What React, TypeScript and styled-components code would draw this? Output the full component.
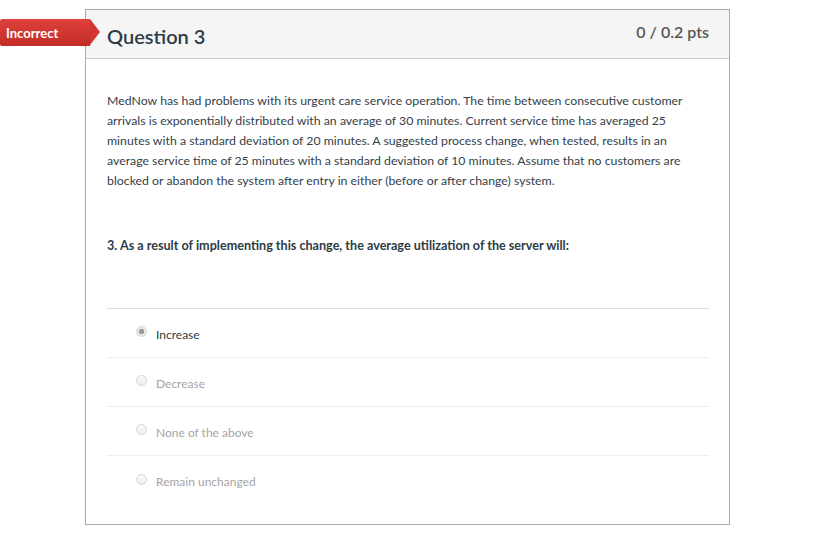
import { FC } from 'react';
import styled, { createGlobalStyle } from 'styled-components';

const GlobalStyle = createGlobalStyle`
    body {
        margin: 0;
        background: #fff;
        font-family: Lato, "Liberation Sans", sans-serif;
    }
`;

const Page = styled.div`
    display: flex;
    align-items: flex-start;
    padding-top: 9px;
`;

const BadgeColumn = styled.div`
    width: 85px;
    flex-shrink: 0;
    position: relative;
    z-index: 1;
`;

const Badge = styled.div`
    position: relative;
    margin-top: 10px;
    width: 90px;
    height: 27px;
    box-sizing: border-box;
    padding-left: 6px;
    display: flex;
    align-items: center;
    color: #fff;
    font-weight: bold;
    font-size: 13px;
    background: linear-gradient(#e0413d, #c22b27);
    border-radius: 2px 0 0 2px;
    &::after {
        content: '';
        position: absolute;
        left: 90px;
        top: 0;
        border-top: 13.5px solid transparent;
        border-bottom: 13.5px solid transparent;
        border-left: 10px solid #d23632;
    }
`;

const Card = styled.div`
    width: 645px;
    box-sizing: border-box;
    border: 1px solid #aaa;
    background: #fff;
`;

const Header = styled.div`
    height: 49px;
    box-sizing: border-box;
    background: #f5f5f5;
    border-bottom: 1px solid #c7cdd1;
    display: flex;
    justify-content: space-between;
    padding: 0 20px 0 21px;
`;

const Title = styled.h2`
    margin: 14px 0 0 0;
    font-size: 20px;
    font-weight: 600;
    color: #2d3b45;
`;

const Points = styled.div`
    margin-top: 12px;
    font-size: 16px;
    font-weight: 600;
    color: #555;
`;

const Body = styled.div`
    padding: 32px 20px 19px 21px;
`;

const Text = styled.p`
    margin: 0;
    font-size: 12.3px;
    line-height: 20px;
    color: #34414a;
`;

const Prompt = styled.p`
    margin: 45px 0 0 0;
    font-size: 12.6px;
    font-weight: bold;
    line-height: 20px;
    color: #2d3b45;
`;

const Answers = styled.div`
    margin-top: 52px;
    border-top: 1px solid #ddd;
`;

const Answer = styled.label<{ $last?: boolean }>`
    display: flex;
    align-items: center;
    height: 49px;
    padding-left: 29px;
    padding-top: 2px;
    box-sizing: border-box;
    border-bottom: ${p => (p.$last ? 'none' : '1px solid #eee')};
`;

const Radio = styled.span<{ $checked?: boolean }>`
    width: 11px;
    height: 11px;
    box-sizing: border-box;
    border-radius: 50%;
    border: 1px solid #d5d5d5;
    background: ${p => (p.$checked ? 'radial-gradient(circle, #999 0 2.5px, #e8e8e8 3px)' : 'linear-gradient(#fafafa, #eee)')};
    margin-right: 9px;
    margin-top: -5px;
`;

const AnswerLabel = styled.span<{ $selected?: boolean }>`
    font-size: 12px;
    color: ${p => (p.$selected ? '#2d3b45' : '#a5a5a5')};
`;

const answers = ['Increase', 'Decrease', 'None of the above', 'Remain unchanged'];

const App: FC = () => {
    return (
        <>
            <GlobalStyle />
            <Page>
                <BadgeColumn>
                    <Badge>Incorrect</Badge>
                </BadgeColumn>
                <Card>
                    <Header>
                        <Title>Question 3</Title>
                        <Points>0 / 0.2 pts</Points>
                    </Header>
                    <Body>
                        <Text>
                            MedNow has had problems with its urgent care service operation. The time between consecutive customer
                            arrivals is exponentially distributed with an average of 30 minutes. Current service time has averaged 25
                            minutes with a standard deviation of 20 minutes. A suggested process change, when tested, results in an
                            average service time of 25 minutes with a standard deviation of 10 minutes. Assume that no customers are
                            blocked or abandon the system after entry in either (before or after change) system.
                        </Text>
                        <Prompt>3. As a result of implementing this change, the average utilization of the server will:</Prompt>
                        <Answers>
                            {answers.map((a, i) => (
                                <Answer key={a} $last={i === answers.length - 1}>
                                    <Radio $checked={i === 0} />
                                    <AnswerLabel $selected={i === 0}>{a}</AnswerLabel>
                                </Answer>
                            ))}
                        </Answers>
                    </Body>
                </Card>
            </Page>
        </>
    );
};

export default App;
